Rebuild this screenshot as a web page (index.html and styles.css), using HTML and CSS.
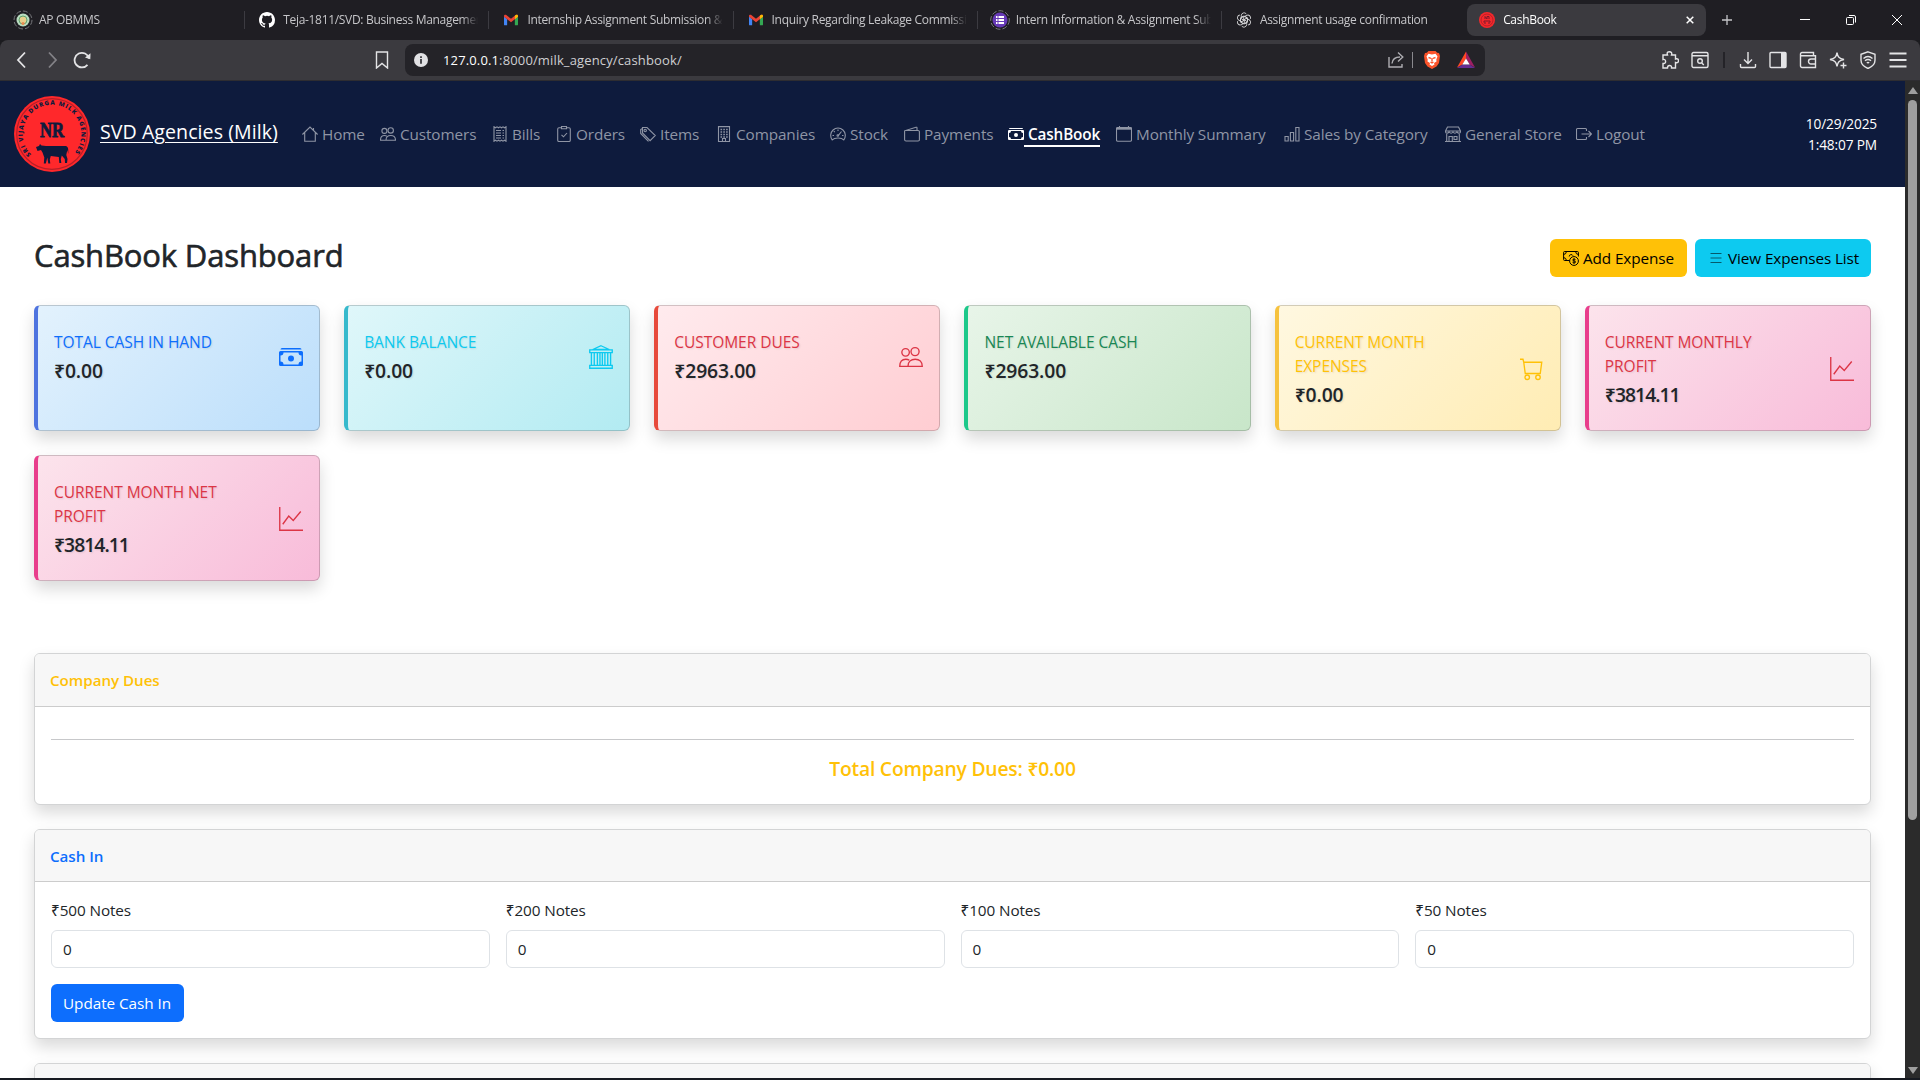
FILE: index.html
```html
<!DOCTYPE html>
<html lang="en">
<head>
<meta charset="utf-8">
<title>CashBook</title>
<link rel="stylesheet" href="styles.css">
</head>
<body>
<svg class="defs" width="0" height="0" aria-hidden="true">
  <defs>
    <symbol id="cash" viewBox="0 0 16 16"><path fill="currentColor" stroke="none" d="M1 3a1 1 0 0 1 1-1h12a1 1 0 0 1 1 1zm7 8a2 2 0 1 0 0-4 2 2 0 0 0 0 4"/><path fill="currentColor" stroke="none" d="M0 5a1 1 0 0 1 1-1h14a1 1 0 0 1 1 1v8a1 1 0 0 1-1 1H1a1 1 0 0 1-1-1zm3 0a2 2 0 0 1-2 2v4a2 2 0 0 1 2 2h10a2 2 0 0 1 2-2V7a2 2 0 0 1-2-2z"/></symbol>
    <symbol id="people" viewBox="0 0 16 16"><circle cx="10.7" cy="4.4" r="2.7"/><circle cx="4.4" cy="4.9" r="2.5"/><path d="M6 14.2c0-3.200 2-4.700 4.800-4.700s4.700 1.500 4.700 4.700zM6 14.200H.5c0-3.200 1.500-4.700 4-4.700 1 0 1.700.200 2.300.600"/></symbol>
    <symbol id="graph" viewBox="0 0 16 16"><path d="M.5 0v15.500H16M2.500 11.500l4-5.500 3 3L14.500 3"/></symbol>
    <symbol id="gmail" viewBox="0 0 16 12"><path fill="#4285f4" d="M0 2v9a1 1 0 0 0 1 1h2.600V5z"/><path fill="#34a853" d="M16 2v9a1 1 0 0 1-1 1h-2.600V5z"/><path fill="#ea4335" d="M0 1.500C0 0 1.500-.400 2.600.400L8 4.500 13.400.400C14.500-.400 16 0 16 1.500V2.300L8 8.500 0 2.300z"/><path fill="#fbbc04" d="M12.400 1.200l1-.8C14.500-.400 16 0 16 1.500v.8L12.400 5z"/></symbol>
  </defs>
</svg>
<div class="window">
  <header class="tabstrip">
    <div class="tab"><svg class="fav" viewBox="0 0 20 20"><circle cx="10" cy="10" r="9" fill="none" stroke="#77787c" stroke-dasharray="5 2"/><circle cx="10" cy="10" r="6.500" fill="#b9dcc0"/><circle cx="10" cy="10" r="4" fill="#e8cf8c" stroke="#5ba36f"/><circle cx="10" cy="13.500" r="1.600" fill="#e98a50"/></svg><span>AP OBMMS</span></div>
    <div class="tab"><svg class="fav s16" viewBox="0 0 16 16"><path fill="#fff" d="M8 0C3.580 0 0 3.580 0 8c0 3.540 2.290 6.530 5.470 7.590.4.070.55-.17.55-.38 0-.19-.01-.82-.01-1.490-2.010.37-2.530-.49-2.690-.94-.09-.23-.48-.94-.82-1.130-.28-.15-.68-.52-.01-.53.63-.01 1.080.58 1.230.82.72 1.210 1.870.87 2.330.66.07-.52.28-.87.51-1.070-1.780-.2-3.640-.89-3.640-3.950 0-.87.31-1.590.82-2.150-.08-.2-.36-1.020.08-2.120 0 0 .67-.21 2.200.82a7.400 7.400 0 0 1 4 0c1.530-1.040 2.200-.82 2.200-.82.44 1.100.16 1.920.08 2.120.51.56.82 1.270.82 2.150 0 3.070-1.870 3.750-3.650 3.950.29.25.54.73.54 1.480 0 1.070-.01 1.930-.01 2.200 0 .21.15.46.55.38A8 8 0 0 0 16 8c0-4.420-3.580-8-8-8"/></svg><span>Teja-1811/SVD: Business Management</span></div>
    <div class="tab"><svg class="fav gm"><use href="#gmail"/></svg><span>Internship Assignment Submission &amp; Details</span></div>
    <div class="tab"><svg class="fav gm"><use href="#gmail"/></svg><span>Inquiry Regarding Leakage Commission</span></div>
    <div class="tab"><svg class="fav" viewBox="0 0 20 20"><circle cx="10" cy="10" r="9.300" fill="none" stroke="#77787c" stroke-dasharray="5 2"/><circle cx="10" cy="10" r="7.500" fill="#673ab7"/><path stroke="#fff" stroke-width="1.800" d="M6 7h1.500M8.500 7H14M6 10h1.500M8.500 10H14M6 13h1.500M8.500 13H14"/></svg><span>Intern Information &amp; Assignment Submission</span></div>
    <div class="tab"><svg class="fav s16 knot" viewBox="0 0 16 16"><g id="petal"><path d="M8 8.300L5.300 6.800V3.500a2.800 2.800 0 0 1 5-1.600M5.300 5.500L8 4l3 1.700"/></g><use href="#petal" transform="rotate(60 8 8)"/><use href="#petal" transform="rotate(120 8 8)"/><use href="#petal" transform="rotate(180 8 8)"/><use href="#petal" transform="rotate(240 8 8)"/><use href="#petal" transform="rotate(300 8 8)"/></svg><span>Assignment usage confirmation</span></div>
    <div class="tab active"><svg class="fav s16" viewBox="0 0 16 16"><circle cx="8" cy="8" r="8" fill="#f5282c"/><circle cx="8" cy="8" r="6" fill="none" stroke="#a91d25" stroke-width=".8"/><path d="M6 7V4.500l2 2.500V4.500h2V7M5 10.500V9h6v1.500M6 10v2M10 10v2" fill="none" stroke="#7b1a2a"/></svg><span>CashBook</span><svg class="x" viewBox="0 0 8 8"><path d="M.7.700l6.600 6.600M7.300.700L.7 7.300"/></svg></div>
    <svg class="plus" viewBox="0 0 10 10"><path d="M5 0v10M0 5h10"/></svg>
    <div class="winbtns">
      <svg viewBox="0 0 12 12"><path d="M1 5.500h10"/></svg>
      <svg viewBox="0 0 12 12"><rect x="1.500" y="3.500" width="7" height="7" rx="1"/><path d="M4 1.500h5a1.500 1.500 0 0 1 1.500 1.500v5.500"/></svg>
      <svg viewBox="0 0 12 12"><path d="M1 1l10 10M11 1L1 11"/></svg>
    </div>
  </header>
  <div class="toolbar">
    <div class="navbtns">
      <svg viewBox="0 0 18 18"><path d="M12 1.500L5 9l7 7.500"/></svg>
      <svg class="dim" viewBox="0 0 18 18"><path d="M6 1.500L13 9l-7 7.500"/></svg>
      <svg viewBox="0 0 18 18"><path d="M14.500 13.800A7.300 7.300 0 1 1 16 7.500"/><path class="solid" d="M12 6.500l5.300 1.800.2-6z"/></svg>
    </div>
    <svg class="bookmark" viewBox="0 0 18 18"><path d="M3.500 1h11v16L9 12.500 3.500 17z"/></svg>
    <div class="urlbar">
      <svg class="info" viewBox="0 0 14 14"><circle cx="7" cy="7" r="7"/><path d="M7 3.300v1.600M7 6v4.700"/></svg>
      <span class="url"><b>127.0.0.1</b>:8000/milk_agency/cashbook/</span>
      <svg class="share" viewBox="0 0 18 18"><path d="M2 6v10h13v-3M5 12.500C5.500 8 8 6 13 6M11 1.500L15.800 6 11 10.500"/></svg>
      <i class="usep"></i>
      <svg class="brave" viewBox="0 0 16 18"><path fill="#fb542b" d="M4.500 0h7l1.700 1.800L15 2l1 3-1 7-2.500 3.500L8 18l-4.500-2.500L1 12 0 5l1-3 1.800-.2z"/><path fill="#fff" d="M8 3.500l3.500-.8 2 2.800-1.200 3 .2 2-2.500 1.500.5 1.500L8 15l-2.500-1.500.5-1.500-2.500-1.500.2-2-1.200-3 2-2.800z"/><path stroke="#fb542b" fill="none" d="M4.500 6.500l2.500.8M11.500 6.500l-2.500.8M8 7v3.500M6.500 11L8 12l1.500-1"/></svg>
      <svg class="bat" viewBox="0 0 18 17"><path fill="#ff4724" d="M9 0L0 16l5.500-3L9 7z"/><path fill="#9e1f63" d="M9 0l9 16-5.500-3L9 7z"/><path fill="#662d91" d="M0 16.500h18L12.500 13h-7z"/><path fill="#fff" d="M9 7l3.700 6H5.300z"/></svg>
    </div>
    <div class="exts">
      <svg viewBox="0 0 18 18"><path d="M2 4h4.500C5.500 1 7 .8 8.500.8S11.300 1.500 10.500 4H14.500v4c2.500-.7 3 .5 3 1.800s-1 2.500-3 1.700V17H10.500c.3-2-.7-2.500-2-2.500s-2 .8-2 2.500H2v-4.500c2 .3 2.600-.8 2.600-2S4 8 2 8.500z"/></svg>
      <svg viewBox="0 0 18 18"><rect x="1" y="1.500" width="16" height="15" rx="1.500"/><path d="M1 4.800h16M10.800 12l2 2"/><circle cx="9" cy="10" r="2.300"/></svg>
      <i class="esep"></i>
      <svg viewBox="0 0 18 18"><path d="M9 1v11M5 8.500L9 12.500l4-4M1.500 13v2.500a1 1 0 0 0 1 1h13a1 1 0 0 0 1-1V13"/></svg>
      <svg viewBox="0 0 18 18"><rect x="1" y="1.500" width="16" height="15" rx="1"/><path class="solid" d="M12 1.500h5v15h-5z"/></svg>
      <svg viewBox="0 0 18 18"><path d="M1.500 5V3a1.500 1.500 0 0 1 1.500-1.500h11.500V5M1.500 4.800h15v11.700H3A1.500 1.500 0 0 1 1.500 15zM17 8h-5a2.500 2.500 0 0 0 0 5h5"/></svg>
      <svg viewBox="0 0 18 18"><path d="M8 1.500C8.700 6 10 7.500 15 8.500 10 9.500 8.700 11 8 15.500 7.300 11 6 9.500 1 8.500 6 7.500 7.300 6 8 1.500zM14.500 11.500v6M11.500 14.500h6"/></svg>
      <svg viewBox="0 0 18 18"><path d="M9 .8l7 2.500v6c0 4-3 6.500-7 8.200-4-1.700-7-4.200-7-8.200v-6zM4.500 7.500c2.700-2.300 6.300-2.300 9 0M6 9.800c1.800-1.500 4.200-1.500 6 0M7.800 12c.8-.6 1.600-.6 2.400 0"/></svg>
      <svg viewBox="0 0 18 18"><path stroke-width="1.800" d="M.5 2.500h17M.5 9h17M.5 15.500h17"/></svg>
    </div>
  </div>
  <div class="viewport">
    <div class="page">
      <nav class="navbar">
        <svg class="logo" viewBox="0 0 76 76">
          <defs><path id="ring" d="M17.800 59.200A29.300 29.300 0 1 1 58.200 59.200"/></defs>
          <circle cx="38" cy="38" r="38" fill="#ff282b"/><circle cx="38" cy="38" r="35.300" fill="none" stroke="#b71f28" stroke-width="1.200"/>
          <text class="ringtext"><textPath href="#ring" startOffset="1" textLength="134">SRI VIJAYA DURGA MILK AGENCIES</textPath></text>
          <text class="mono" x="26" y="40.500" textLength="24" lengthAdjust="spacingAndGlyphs">NR</text>
          <path fill="#0e1b3d" d="M22 51l3-1 1-2 1.500 1.500L32 50h19c3 0 3.500 2 3.300 8l-1-4-1 5 1.200 4-.5 4h-2l-.2-4-3-3.500-1 3.500.5 4h-2l-.5-6-8-1-1 3.500.5 4h-2l-1-6-1.500 6h-2l.5-6-1.800-5-1.500-2.500-3.500 1z"/>
        </svg>
        <a class="brand">SVD Agencies (Milk)</a>
        <div class="links">
          <a><svg viewBox="0 0 16 16"><path d="M.4 8.500L8 1l7.600 7.500M11.500 2v2.200M2.700 6.500v8.700h10.600V6.500"/></svg><span>Home</span></a>
          <a><svg><use href="#people"/></svg><span>Customers</span></a>
          <a><svg viewBox="0 0 16 16"><path d="M2 .8l1.500 1L5 .8l1.500 1L8 .8l1.500 1 1.500-1 1.500 1 1.500-1v14.400l-1.500-1-1.500 1-1.500-1-1.500 1-1.500-1-1.500 1-1.500-1-1.500 1zM4 4.500h5M4 7h5M4 9.500h5M4 12h5M10.500 4.500H12M10.500 7H12M10.500 9.500H12M10.500 12H12"/></svg><span>Bills</span></a>
          <a><svg viewBox="0 0 16 16"><path d="M5 1.800H3A1.300 1.300 0 0 0 1.700 3v11.200a1.300 1.300 0 0 0 1.300 1.300h10a1.300 1.300 0 0 0 1.300-1.300V3A1.300 1.300 0 0 0 13 1.800h-2M5.500.500h5v2.300h-5zM5.500 8.800l2 2L11 7"/></svg><span>Orders</span></a>
          <a><svg viewBox="0 0 16 16"><path d="M2.500 1.500H7L15.300 9.500l-5.200 5.200L2.500 7zM2.500 2.500L.7 3.500v4l7.800 7.800"/><circle cx="5.200" cy="4.500" r="1.200"/></svg><span>Items</span></a>
          <a><svg viewBox="0 0 16 16"><path d="M2.500.600h11v14.900h-11zM6.500 15.500v-3h3v3"/><path stroke-width="1.500" stroke-dasharray="1.600 1.200" d="M4.500 3.500h8M4.500 6h8M4.500 8.500h8M4.500 11h8"/></svg><span>Companies</span></a>
          <a><svg viewBox="0 0 16 16"><path d="M2.200 13.800A7.300 7.300 0 1 1 13.800 13.800C12 12 10 12 8 12s-4 0-5.800 1.800zM8 9.800L11.500 5.500M8 3.500v1.500M3.800 5.200l1 1M2.500 9.500H4M12 9.500h1.500"/><circle cx="7.800" cy="9.500" r=".8"/></svg><span>Stock</span></a>
          <a><svg viewBox="0 0 16 16"><path d="M2 4.500h12a1.300 1.300 0 0 1 1.400 1.300v7.900A1.300 1.300 0 0 1 14 15H2a1.400 1.400 0 0 1-1.400-1.300V4.800L12 1.300q1-.3 1 .7v2.500"/></svg><span>Payments</span></a>
          <a class="on"><svg><use href="#cash"/></svg><span>CashBook</span></a>
          <a><svg viewBox="0 0 16 16"><path d="M1.500 1.500h13a1 1 0 0 1 1 1v11.500a1.300 1.300 0 0 1-1.300 1.300H1.800A1.300 1.300 0 0 1 .5 14V2.500a1 1 0 0 1 1-1zM3.500 0v2M12.500 0v2"/><path stroke-width="2.200" d="M.5 2.600h15"/></svg><span>Monthly Summary</span></a>
          <a><svg viewBox="0 0 16 16"><path d="M1 10.500h3.200v4.500H1zM6.400 6.500h3.200V15H6.400zM11.800 1.500H15V15h-3.200z"/></svg><span>Sales by Category</span></a>
          <a><svg viewBox="0 0 16 16"><path d="M2.500 1h11l2 4v1q-1.200 2.500-3.700 0-1.900 2.500-3.800 0-1.900 2.500-3.800 0Q1.700 8.500.5 6V5zM.5 5h15M1.700 8v7.300M14.300 8v7.300M0 15.500h16M4 15.500v-5h3.300v5M9 10.500h3v3H9z"/></svg><span>General Store</span></a>
          <a><svg viewBox="0 0 16 16"><path d="M10.500 5V3.500A1 1 0 0 0 9.500 2.500h-8a1 1 0 0 0-1 1v9a1 1 0 0 0 1 1h8a1 1 0 0 0 1-1V11M5.500 8h10M12.500 5l3 3-3 3"/></svg><span>Logout</span></a>
        </div>
        <div class="clock">10/29/2025<br>1:48:07 PM</div>
      </nav>
      <main>
        <div class="head">
          <h1>CashBook Dashboard</h1>
          <div class="actions">
            <a class="btn warn"><svg viewBox="0 0 16 16"><path d="M6.500 10.500H1.500A1 1 0 0 1 .6 9.500V2.500A1 1 0 0 1 1.500 1.500h13a1 1 0 0 1 .9 1v4M.6 4.500Q3 4.500 3.500 1.500M12.500 1.500q.5 3 2.900 3M.6 7.500q2.500.3 2.900 3M6.200 6.500a2 2 0 0 1 3.800-.8"/><circle cx="11" cy="11" r="4.400"/><path d="M12.500 9.700c-.6-.9-2.800-.8-2.800.3 0 1.300 2.900.6 2.900 2 0 1.100-2.400 1.200-3.100.2M11 8.300v5.400"/></svg><span>Add Expense</span></a>
            <a class="btn cyan"><svg viewBox="0 0 16 16"><path d="M2.500 3.500h11M2.500 8h11M2.500 12.500h11"/></svg><span>View Expenses List</span></a>
          </div>
        </div>
        <section class="stats">
          <article class="stat blue"><div><h2>Total Cash In Hand</h2><p>₹0.00</p></div><svg><use href="#cash"/></svg></article>
          <article class="stat teal"><div><h2>Bank Balance</h2><p>₹0.00</p></div><svg viewBox="0 0 16 16"><path stroke-width=".9" d="M8 .5l5.500 2.500h-11zM.5 3.200h15v1.900H.5zM.5 13.600h15v1.900H.5zM1.600 5.100v8.500M3.500 5.100v8.500M5.600 5.100v8.500M7.300 5.100v8.500M8.900 5.100v8.500M10.600 5.100v8.500M12.500 5.100v8.500M14.400 5.100v8.500"/></svg></article>
          <article class="stat red"><div><h2>Customer Dues</h2><p>₹2963.00</p></div><svg><use href="#people"/></svg></article>
          <article class="stat green"><div><h2>Net Available Cash</h2><p>₹2963.00</p></div></article>
          <article class="stat yellow"><div><h2>Current Month Expenses</h2><p>₹0.00</p></div><svg viewBox="0 0 16 16"><path d="M0 1.500h2l.5 2h12L13.500 11h-10L2.500 3.500"/><circle cx="4.800" cy="13.500" r="1.500"/><circle cx="12" cy="13.500" r="1.500"/></svg></article>
          <article class="stat pink"><div><h2>Current Monthly Profit</h2><p>₹3814.11</p></div><svg><use href="#graph"/></svg></article>
          <article class="stat pink"><div><h2>Current Month Net Profit</h2><p>₹3814.11</p></div><svg><use href="#graph"/></svg></article>
        </section>
        <section class="panel dues">
          <h3>Company Dues</h3>
          <div class="body"><hr><p class="total">Total Company Dues: ₹0.00</p></div>
        </section>
        <section class="panel cashin">
          <h3>Cash In</h3>
          <div class="body">
            <div class="notes">
              <div class="field"><span>₹500 Notes</span><div class="input">0</div></div>
              <div class="field"><span>₹200 Notes</span><div class="input">0</div></div>
              <div class="field"><span>₹100 Notes</span><div class="input">0</div></div>
              <div class="field"><span>₹50 Notes</span><div class="input">0</div></div>
            </div>
            <a class="btn primary"><span>Update Cash In</span></a>
          </div>
        </section>
        <section class="panel next"><h3></h3></section>
      </main>
    </div>
    <div class="scrollbar"><i class="up"></i><i class="thumb"></i><i class="down"></i></div>
  </div>
</div>
</body>
</html>
```
FILE: styles.css
```css
* { box-sizing: border-box; }
body { margin: 0; background: #1b1b1f; font-family: "Open Sans", "Noto Sans", sans-serif; font-size: 15.3px; line-height: 24px; color: #212529; letter-spacing: -.1px; }
h1, h2, h3, p { margin: 0; font-weight: 400; }
svg { flex: none; fill: none; stroke: currentColor; stroke-width: 1; }
.defs { position: absolute; }
.window { width: 1920px; height: 1080px; overflow: hidden; display: flex; flex-direction: column; border-bottom: 2px solid #171a21; }

.tabstrip { height: 40px; flex: none; display: flex; align-items: center; background: #1f1e23; padding-left: 1px; color: #c6c6c9; font-size: 12px; letter-spacing: -.31px; }
.tab { width: 244.200px; height: 18px; display: flex; align-items: center; padding: 0 10px 0 12px; gap: 6px; border-right: 1px solid #3c3b41; white-space: nowrap; }
.tab span { flex: 1; min-width: 0; overflow: hidden; -webkit-mask-image: linear-gradient(to right, #000 calc(100% - 16px), transparent); mask-image: linear-gradient(to right, #000 calc(100% - 16px), transparent); }
.tab:nth-child(6) { border-right: 0; }
.fav { width: 20px; height: 20px; stroke: none; }
.fav.s16 { width: 16px; height: 16px; margin: 0 2px; }
.fav.gm { width: 14px; height: 12px; margin: 0 3px; }
.fav.knot { stroke: #d6d6d8; stroke-width: .9; }
.tab.active { width: 239px; height: 32px; margin-left: 1px; background: #3b3a3f; border: 0; border-radius: 8px; color: #fff; padding: 0 12px 0 10px; }
.tab .x { width: 8px; height: 8px; stroke: #fff; stroke-width: 1.5; }
.plus { width: 10px; height: 10px; margin-left: 16px; stroke: #c6c6c9; stroke-width: 1.3; }
.winbtns { margin-left: auto; display: flex; gap: 34px; padding-right: 17px; }
.winbtns svg { width: 12px; height: 12px; stroke: #fff; }

.toolbar { height: 41px; flex: none; display: flex; align-items: center; background: #3b3a3f; border-bottom: 1px solid #2e2d31; border-radius: 8px 8px 0 0; color: #e4e4e6; }
.toolbar svg { width: 18px; height: 18px; stroke-width: 1.4; }
.toolbar .solid { fill: currentColor; stroke: none; }
.navbtns { display: flex; gap: 12px; padding-left: 13px; width: 373px; }
.navbtns svg { stroke-width: 1.8; }
.navbtns .dim { color: #838287; }
.urlbar { width: 1080px; height: 32px; margin-left: 14px; background: #242328; border-radius: 8px; display: flex; align-items: center; padding: 0 10px 0 9px; }
.urlbar .info { width: 14px; height: 14px; stroke: none; }
.info circle { fill: #e1e1e4; }
.info path { stroke: #242328; stroke-width: 1.6; }
.url { flex: 1; padding-left: 15px; font-size: 13px; letter-spacing: .14px; color: #cfcfd2; }
.url b { font-weight: 400; color: #fff; }
.urlbar .share { color: #aeadb2; }
.usep { width: 1px; height: 16px; background: #8a898e; margin: 0 11px 0 7px; }
.urlbar .brave { width: 16px; stroke: none; }
.urlbar .bat { margin-left: 17px; stroke: none; }
.exts { margin-left: 176px; display: flex; align-items: center; gap: 12px; }
.esep { width: 2px; height: 16px; background: #242328; margin: 0 2px; }

.viewport { flex: 1; min-height: 0; display: flex; }
.page { width: 1905px; background: #fff; overflow: hidden; }
.navbar { height: 106px; background: #0e1b3d; display: flex; align-items: center; padding: 0 28px 0 14px; }
.logo { width: 76px; height: 76px; stroke: none; }
.ringtext { font: 800 6.200px "Open Sans", sans-serif; fill: #0e1b3d; }
.mono { font: 700 21px "Liberation Serif", serif; fill: #0e1b3d; stroke: #0e1b3d; stroke-width: .8px; }
.brand { width: 202px; padding: 0 0 4px 10px; color: #fff; font-size: 19.6px; letter-spacing: .05px; text-decoration: underline; text-underline-offset: 3px; white-space: nowrap; }
.links { display: grid; grid-template-columns: 78px 112px 64px 84px 76px 114px 74px 104px 108px 168px 161px 131px 80px; margin-left: 10px; color: #8f95a5; }
.links a { display: flex; gap: 4px; align-items: center; white-space: nowrap; }
.links svg { width: 16px; height: 16px; stroke-width: 1.1; }
.links .on { color: #fff; font-weight: 600; gap: 0; letter-spacing: -.15px; }
.links .on span { padding-left: 4px; box-shadow: 0 -1px 0 #fff inset, 0 1px 0 #fff; height: 24px; }
.clock { margin-left: auto; color: #fff; font-size: 13.7px; line-height: 21px; text-align: right; letter-spacing: -.15px; }

main { padding: 52px 34px 0; }
.head { height: 66px; display: flex; justify-content: space-between; }
h1 { font-size: 31px; line-height: 38px; letter-spacing: -.15px; margin-top: -3px; -webkit-text-stroke: .6px #212529; }
.actions { display: flex; gap: 8px; }
.btn { height: 38px; border-radius: 6px; display: inline-flex; align-items: center; gap: 4px; padding: 0 13px; color: #000; white-space: nowrap; }
.btn svg { width: 16px; height: 16px; }
.warn { background: #ffc107; width: 137px; }
.cyan { background: #0dcaf0; width: 176px; }
.cyan svg { opacity: .55; }
.primary { background: #0d6efd; color: #fff; width: 133px; padding: 0 12px; letter-spacing: -.05px; }
.stats { display: grid; grid-template-columns: repeat(6, 1fr); gap: 24px; }
.stat { height: 126px; border: 1px solid rgba(0,0,0,.175); border-left-width: 4px; border-radius: 6px; padding: 24px 16px 0; display: flex; justify-content: space-between; align-items: flex-start; box-shadow: 0 8px 16px rgba(0,0,0,.15); background-origin: border-box; }
.stat > div { width: 190px; text-shadow: 1px 1px 2px rgba(0,0,0,.1); }
.stat h2 { font-size: 15.5px; line-height: 24px; text-transform: uppercase; margin-bottom: 4px; letter-spacing: -.05px; }
.stat p { font-size: 19.3px; line-height: 26px; font-weight: 600; color: #212529; letter-spacing: -.1px; }
.pink.stat p { letter-spacing: -.95px; }
.stat svg { width: 24px; height: 24px; margin-top: 15px; stroke-width: .9; }
.yellow svg, .pink svg { margin-top: 27px; }
.blue { background-image: linear-gradient(135deg, #e3f2fd, #bbdefb); border-left-color: #4e73df; color: #0d6efd; }
.teal { background-image: linear-gradient(135deg, #e0f7fa, #b2ebf2); border-left-color: #36b9cc; color: #0dcaf0; }
.red { background-image: linear-gradient(135deg, #ffebee, #ffcdd2); border-left-color: #e74a3b; color: #dc3545; }
.green { background-image: linear-gradient(135deg, #e8f5e9, #c8e6c9); border-left-color: #1cc88a; color: #198754; }
.yellow { background-image: linear-gradient(135deg, #fff8e1, #ffecb3); border-left-color: #f6c23e; color: #ffc107; }
.pink { background-image: linear-gradient(135deg, #fce4ec, #f8bbd9); border-left-color: #e83e8c; color: #dc3545; }
.panel { border: 1px solid #d3d4d5; border-radius: 6px; box-shadow: 0 8px 16px rgba(0,0,0,.15); background: #fff; margin-bottom: 24px; overflow: hidden; }
.panel h3 { height: 52px; padding: 14px 15px 0; background: #f7f7f7; border-bottom: 1px solid #ccc; font-size: 15.2px; line-height: 24px; font-weight: 600; letter-spacing: -.05px; }
.panel .body { padding: 0 16px; }
.dues { margin-top: 72px; height: 152px; }
.dues h3 { height: 53px; color: #ffc107; }
hr { margin: 32px 0 16px; border: 0; border-top: 1px solid #c7c8ca; }
.total { text-align: center; color: #ffc107; font-size: 19.3px; line-height: 26px; font-weight: 600; letter-spacing: -.2px; }
.cashin { height: 210px; }
.cashin h3 { color: #0d6efd; }
.cashin .body { padding-top: 16px; }
.notes { display: grid; grid-template-columns: repeat(4, 1fr); gap: 16px; margin-bottom: 16px; }
.field span { display: block; margin-bottom: 8px; }
.input { height: 38px; border: 1px solid #dee2e6; border-radius: 6px; padding: 6px 11px; }
.scrollbar { width: 15px; background: #2b2b2b; display: flex; flex-direction: column; align-items: center; padding: 6px 0 4px; }
.up { border: 5px solid transparent; border-top: 0; border-bottom: 7px solid #9f9f9f; }
.thumb { width: 9px; height: 720px; margin-top: 6px; border-radius: 5px; background: #9f9f9f; }
.down { margin-top: auto; border: 5px solid transparent; border-bottom: 0; border-top: 7px solid #9f9f9f; }
```
